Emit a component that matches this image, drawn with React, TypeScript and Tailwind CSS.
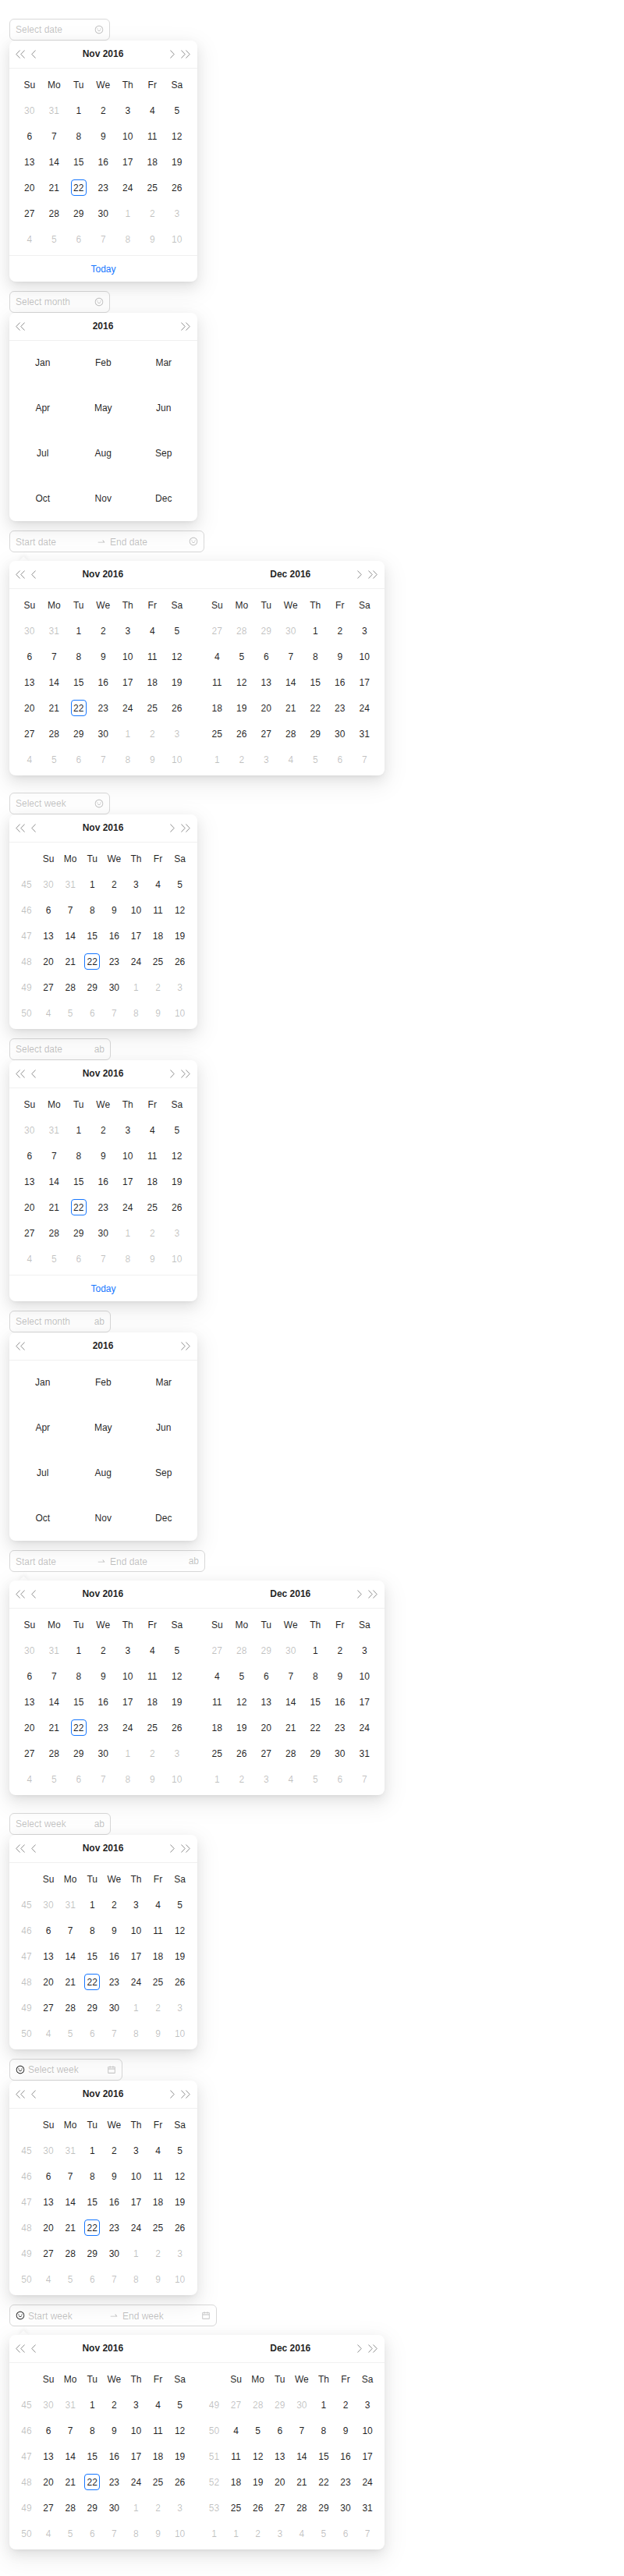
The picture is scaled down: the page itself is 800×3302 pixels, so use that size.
import type { ReactNode } from "react";
import { AiOutlineCalendar, AiOutlineSmile, AiOutlineSwapRight } from "react-icons/ai";

type Day = { n: number; out: boolean };

const WEEKDAYS = ["Su", "Mo", "Tu", "We", "Th", "Fr", "Sa"];
const MONTHS = ["Jan", "Feb", "Mar", "Apr", "May", "Jun", "Jul", "Aug", "Sep", "Oct", "Nov", "Dec"];

// 42 cells: tail of previous month, the month itself, head of next month
function buildDays(prevFrom: number, prevTo: number, count: number): Day[] {
  const out: Day[] = [];
  for (let n = prevFrom; n <= prevTo; n++) out.push({ n, out: true });
  for (let n = 1; n <= count; n++) out.push({ n, out: false });
  for (let n = 1; out.length < 42; n++) out.push({ n, out: true });
  return out;
}

const NOV = { title: "Nov 2016", days: buildDays(30, 31, 30), weeks: [45, 46, 47, 48, 49, 50], today: 22 };
const DEC = { title: "Dec 2016", days: buildDays(27, 30, 31), weeks: [49, 50, 51, 52, 53, 1], today: 0 };

function Chevron({ dir }: { dir: "left" | "right" }) {
  return (
    <svg width="6" height="11" viewBox="0 0 6 11" fill="none" stroke="#8f8f8f" strokeWidth="1">
      <path d={dir === "left" ? "M5.6 .5 .8 5.5 5.6 10.5" : "M.4 .5 5.2 5.5 .4 10.5"} />
    </svg>
  );
}

function DoubleChevron({ dir }: { dir: "left" | "right" }) {
  return (
    <svg width="12" height="11" viewBox="0 0 12 11" fill="none" stroke="#8f8f8f" strokeWidth="1">
      <path
        d={
          dir === "left"
            ? "M5.6 .5 .8 5.5 5.6 10.5M11.6 .5 6.8 5.5 11.6 10.5"
            : "M.4 .5 5.2 5.5 .4 10.5M6.4 .5 11.2 5.5 6.4 10.5"
        }
      />
    </svg>
  );
}

function Header({ title, left, right, single }: { title: string; left?: boolean; right?: boolean; single?: boolean }) {
  return (
    <div className="grid h-9 grid-cols-[1fr_auto_1fr] items-center border-b border-[#f0f0f0] pl-[8px] pr-[9px]">
      <div className="flex items-center gap-[7.5px]">
        {left && <DoubleChevron dir="left" />}
        {left && !single && <Chevron dir="left" />}
      </div>
      <div className="text-xs font-bold leading-5 text-[rgba(0,0,0,0.88)] -mt-px">{title}</div>
      <div className="flex items-center justify-end gap-[8px]">
        {right && !single && <Chevron dir="right" />}
        {right && <DoubleChevron dir="right" />}
      </div>
    </div>
  );
}

function Cell({ day, today }: { day: Day; today: number }) {
  const isToday = !day.out && day.n === today;
  return (
    <div className={`flex h-[33px] items-center justify-center ${day.out ? "text-[rgba(0,0,0,0.25)]" : "text-[rgba(0,0,0,0.88)]"}`}>
      {isToday ? (
        <span className="flex h-[20.5px] w-[20.5px] items-center justify-center rounded-[4px] border border-[#1677ff]">{day.n}</span>
      ) : (
        day.n
      )}
    </div>
  );
}

function DayGrid({ data }: { data: typeof NOV }) {
  return (
    <div className="pl-[10px] pt-[5px] pb-[4px] text-xs">
      <div className="grid grid-cols-[repeat(7,31.5px)]">
        {WEEKDAYS.map((w) => (
          <div key={w} className="flex h-[32px] items-center justify-center text-[rgba(0,0,0,0.88)]">{w}</div>
        ))}
        {data.days.map((d, i) => (
          <Cell key={i} day={d} today={data.today} />
        ))}
      </div>
    </div>
  );
}

function WeekRowStart({ index, week, children }: { index: number; week?: number; children: ReactNode }) {
  return (
    <>
      {index % 7 === 0 && (
        <div className="flex h-[33px] items-center justify-center text-[rgba(0,0,0,0.25)]">{week}</div>
      )}
      {children}
    </>
  );
}

function WeekGrid({ data }: { data: typeof NOV }) {
  return (
    <div className="pl-[8px] pt-[5px] pb-[4px] text-xs">
      <div className="grid grid-cols-[28px_repeat(7,28.1px)]">
        <div className="h-[32px]" />
        {WEEKDAYS.map((w) => (
          <div key={w} className="flex h-[32px] items-center justify-center text-[rgba(0,0,0,0.88)]">{w}</div>
        ))}
        {data.days.map((d, i) => (
          <WeekRowStart key={i} index={i} week={data.weeks[i / 7]}>
            <Cell day={d} today={data.today} />
          </WeekRowStart>
        ))}
      </div>
    </div>
  );
}

const PANEL = "relative z-10 rounded-lg bg-white shadow-[0_6px_16px_0_rgba(0,0,0,0.08),0_3px_6px_-4px_rgba(0,0,0,0.12),0_9px_28px_8px_rgba(0,0,0,0.05)]";

function DatePanel({ week, footer }: { week?: boolean; footer?: boolean }) {
  return (
    <div className={`${PANEL} w-[241px]`}>
      <Header title={NOV.title} left right />
      {week ? <WeekGrid data={NOV} /> : <DayGrid data={NOV} />}
      {footer && (
        <div className="flex h-[34px] items-center justify-center border-t border-[#f0f0f0] text-xs text-[#1677ff]">Today</div>
      )}
    </div>
  );
}

function MonthPanel() {
  return (
    <div className={`${PANEL} w-[241px]`}>
      <Header title="2016" left right single />
      <div className="-mt-px grid h-[232px] grid-cols-[repeat(3,77.5px)] auto-rows-[58px] pl-[4px] text-xs text-[rgba(0,0,0,0.88)]">
        {MONTHS.map((m) => (
          <div key={m} className="flex items-center justify-center">{m}</div>
        ))}
      </div>
    </div>
  );
}

function RangePanel({ week }: { week?: boolean }) {
  return (
    <div className="relative mt-[11px]">
      <div className="absolute -top-[4px] left-[13.5px] z-10 h-[8.5px] w-[8.5px] rotate-45 bg-white shadow-[-2px_-2px_5px_rgba(0,0,0,0.05)]" />
      <div className={`${PANEL} flex w-[481px]`}>
        <div className="w-[240.5px]">
          <Header title={NOV.title} left />
          {week ? <WeekGrid data={NOV} /> : <DayGrid data={NOV} />}
        </div>
        <div className="w-[240.5px]">
          <Header title={DEC.title} right />
          {week ? <WeekGrid data={DEC} /> : <DayGrid data={DEC} />}
        </div>
      </div>
    </div>
  );
}

function Placeholder({ children }: { children: string }) {
  return <span className="text-xs text-[rgba(0,0,0,0.25)]">{children}</span>;
}

function Suffix({ kind }: { kind: "smile" | "ab" | "calendar" }) {
  if (kind === "ab") return <span className="text-xs text-[rgba(0,0,0,0.25)]">ab</span>;
  if (kind === "calendar") return <AiOutlineCalendar className="text-xs text-[rgba(0,0,0,0.25)]" />;
  return <AiOutlineSmile className="text-xs text-[rgba(0,0,0,0.25)]" />;
}

function Field({ text, width, suffix, prefix }: { text: string; width: string; suffix: "smile" | "ab" | "calendar"; prefix?: boolean }) {
  return (
    <div className={`flex h-7 items-center justify-between rounded-md border border-[#d9d9d9] bg-white px-[7px] ${width}`}>
      <div className="flex items-center gap-1">
        {prefix && <AiOutlineSmile className="text-xs text-[rgba(0,0,0,0.88)]" />}
        <Placeholder>{text}</Placeholder>
      </div>
      <Suffix kind={suffix} />
    </div>
  );
}

function RangeField({ start, end, width, suffix, prefix }: { start: string; end: string; width: string; suffix: "smile" | "ab" | "calendar"; prefix?: boolean }) {
  return (
    <div className={`flex h-7 items-center rounded-md border border-[#d9d9d9] bg-white px-[7px] ${width}`}>
      {prefix && <AiOutlineSmile className="mr-1 shrink-0 text-xs text-[rgba(0,0,0,0.88)]" />}
      <div className="w-[100px] shrink-0">
        <Placeholder>{start}</Placeholder>
      </div>
      <div className="flex w-[21px] shrink-0 pl-[4px]">
        <AiOutlineSwapRight className="text-xs text-[rgba(0,0,0,0.25)]" />
      </div>
      <div className="flex-1">
        <Placeholder>{end}</Placeholder>
      </div>
      <Suffix kind={suffix} />
    </div>
  );
}

export default function App() {
  return (
    <div className="px-3 pt-6 pb-[35px] [font-family:'Liberation_Sans',Arial,sans-serif]">
      <div className="mb-3">
        <Field text="Select date" width="w-[129px]" suffix="smile" />
        <DatePanel footer />
      </div>
      <div className="mb-3">
        <Field text="Select month" width="w-[129px]" suffix="smile" />
        <MonthPanel />
      </div>
      <div className="mb-[22px]">
        <RangeField start="Start date" end="End date" width="w-[250px]" suffix="smile" />
        <RangePanel />
      </div>
      <div className="mb-3">
        <Field text="Select week" width="w-[129px]" suffix="smile" />
        <DatePanel week />
      </div>
      <div className="mb-3">
        <Field text="Select date" width="w-[130px]" suffix="ab" />
        <DatePanel footer />
      </div>
      <div className="mb-3">
        <Field text="Select month" width="w-[130px]" suffix="ab" />
        <MonthPanel />
      </div>
      <div className="mb-[23px]">
        <RangeField start="Start date" end="End date" width="w-[251px]" suffix="ab" />
        <RangePanel />
      </div>
      <div className="mb-3">
        <Field text="Select week" width="w-[130px]" suffix="ab" />
        <DatePanel week />
      </div>
      <div className="mb-3">
        <Field text="Select week" width="w-[145px]" suffix="calendar" prefix />
        <DatePanel week />
      </div>
      <div>
        <RangeField start="Start week" end="End week" width="w-[266px]" suffix="calendar" prefix />
        <RangePanel week />
      </div>
    </div>
  );
}
